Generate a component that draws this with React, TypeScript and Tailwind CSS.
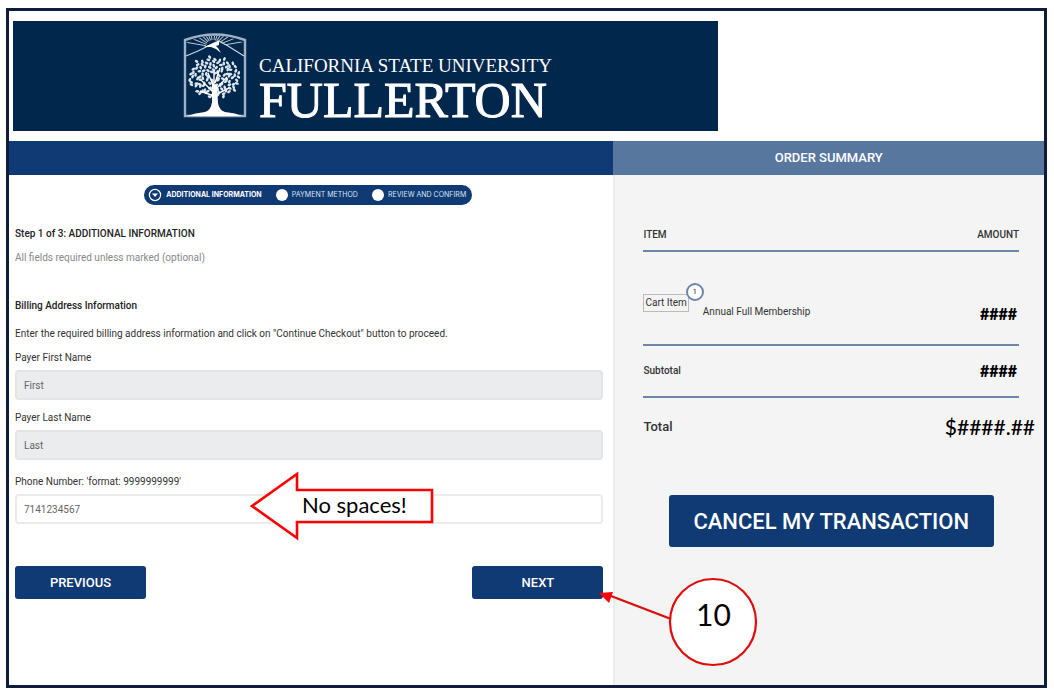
import { useState } from 'react'

const steps = ['ADDITIONAL INFORMATION', 'PAYMENT METHOD', 'REVIEW AND CONFIRM']

const rays = [-80, -68, -56, -44, -32, -20, -8, 8, 20, 32, 44, 56, 68, 80]

// leaves spread evenly over the crown, each one turned differently
const leaves = Array.from({ length: 110 }, (_, i) => {
    const angle = i * 2.39996
    const radius = Math.sqrt((i + 2) / 112)
    return {
        x: 31.5 + Math.cos(angle) * radius * 26 + Math.sin(i * 7.3) * 0.9,
        y: 44.5 + Math.sin(angle) * radius * 20.5 + Math.cos(i * 5.1) * 0.9,
        turn: (i * i * 37) % 180
    }
})

function TreeLogo() {
    return (
        <svg width="64" height="86" viewBox="0 0 64 86" fill="none" aria-hidden="true">
            <clipPath id="crest">
                <path d="M3 10 Q32 -5 61 10 V22 L49 15 L36 9 L28 15 L3 24 Z" />
            </clipPath>
            <g clipPath="url(#crest)" stroke="#b9c7d8" strokeWidth="1">
                {rays.map(deg => (
                    <path key={deg} d="M30 7 V-28" transform={`rotate(${deg} 30 14)`} />
                ))}
            </g>
            <path d="M2 7 Q32 -4 62 7 V83 H2 Z" stroke="#9fb1c6" strokeWidth="2.4" />
            <path d="M3 23 L15 18 L25 13 L31 10 L36 8 L45 13 L61 23" stroke="#c9d5e2" strokeWidth="1.2" />
            <path d="M36 8 L31 10 L21 14 L28 14 L33 16 L38 20 L35 15 L33 13 L36 12 Z" fill="#fff" />
            {leaves.map((leaf, i) => (
                <ellipse
                    key={i}
                    cx={leaf.x}
                    cy={leaf.y}
                    rx="2"
                    ry="1.3"
                    fill="#dce6f0"
                    transform={`rotate(${leaf.turn} ${leaf.x} ${leaf.y})`}
                />
            ))}
            <path d="M31 72 V38 M31 60 L18 47 M32 57 L44 44 M31 54 L25 40 M32 62 L46 55 M31 63 L17 58 M32 50 L37 35" stroke="#fff" strokeWidth="1.4" />
            <path d="M29 52 H34 L35 70 Q36 77 42 79 Q53 80 59 83 H4 Q12 80 22 79 Q28 77 29 69 Z" fill="#fff" />
        </svg>
    )
}

function Banner() {
    return (
        <div className="flex h-[110px] w-[68.6%] items-center gap-3 bg-[#02274c] pl-[170px] text-white">
            <TreeLogo />
            <div className="whitespace-nowrap pt-6 font-['Liberation_Serif',serif]">
                <p className="text-[19px] leading-6">CALIFORNIA STATE UNIVERSITY</p>
                <p className="text-[50px] leading-[44px] [-webkit-text-stroke:1px_white]">FULLERTON</p>
            </div>
        </div>
    )
}

function StepBar() {
    return (
        <div className="flex justify-center pr-1.5">
            <ol className="flex h-5 w-[328px] items-center justify-between rounded-full bg-[#0f3a73] pl-1 pr-1.5 text-[7px] text-white font-[Inter,sans-serif]">
                {steps.map((step, i) => (
                    <li key={step} className="flex items-center gap-1 whitespace-nowrap">
                        {i === 0 ? (
                            <svg width="14" height="14" viewBox="0 0 14 14" aria-hidden="true">
                                <circle cx="7" cy="7" r="5.6" fill="none" stroke="#fff" strokeWidth="1.2" />
                                <path d="M4 5.5 H10 L7 9 Z" fill="#fff" />
                            </svg>
                        ) : (
                            <span className="size-3 rounded-full bg-white" />
                        )}
                        <span className={i === 0 ? 'font-bold' : 'text-[#dbe5f2]'}>{step}</span>
                    </li>
                ))}
            </ol>
        </div>
    )
}

function NoSpacesNote() {
    return (
        <div className="absolute -top-[23px] left-[234px] h-[70px] w-[186px]">
            <svg className="absolute inset-0" width="186" height="70" viewBox="0 0 186 70" aria-hidden="true">
                <path d="M3 35 L48 3 V19 H183 V51 H48 V67 Z" fill="#fff" stroke="#f00" strokeWidth="2.6" />
            </svg>
            <p className="relative pl-[53px] pt-5 text-[22px] leading-7 text-black font-[Lato,sans-serif]">No spaces!</p>
        </div>
    )
}

function StepCallout() {
    return (
        <div className="absolute -right-[156px] top-2 z-10 h-[96px] w-[160px]">
            <svg className="absolute inset-0" width="160" height="96" viewBox="0 0 160 96" aria-hidden="true">
                <path d="M12 22 L72 45" stroke="#d90d0d" strokeWidth="2.4" />
                <path d="M0 19 L14 18 L10 29 Z" fill="#f00" />
                <circle cx="114" cy="48" r="43" fill="#fff" stroke="#e00b0b" strokeWidth="2.2" />
            </svg>
            <p className="relative pl-[68px] pt-5 text-center text-[30px] leading-10 text-black font-[Lato,sans-serif]">10</p>
        </div>
    )
}

const inputStyle = 'mt-1 block h-[30px] w-full rounded-sm border-2 px-[7px] text-[10px] text-[#666]'
const buttonStyle = 'h-[33px] w-[131px] rounded-[3px] bg-[#0f3a73] text-[13px] font-medium text-white'

function PayerForm() {

    const [phone, setPhone] = useState('7141234567')

    return (
        <form className="pl-1.5 pr-2.5 text-[10px] leading-4 text-[#333]" onSubmit={e => e.preventDefault()}>
            <h1 className="mt-[21px] font-medium text-[#222]">Step 1 of 3: ADDITIONAL INFORMATION</h1>
            <p className="mt-2 text-[#888]">All fields required unless marked (optional)</p>
            <h2 className="mt-8 font-medium text-[#222]">Billing Address Information</h2>
            <p className="mt-3">
                Enter the required billing address information and click on "Continue Checkout" button to proceed.
            </p>

            <div className="mt-2">
                <label htmlFor="first">Payer First Name</label>
                <input id="first" className={`${inputStyle} border-[#e2e4e6] bg-[#ebecee]`} defaultValue="First" readOnly />
            </div>
            <div className="mt-2.5">
                <label htmlFor="last">Payer Last Name</label>
                <input id="last" className={`${inputStyle} border-[#e2e4e6] bg-[#ebecee]`} defaultValue="Last" readOnly />
            </div>
            <div className="mt-3.5">
                <label htmlFor="phone">Phone Number: 'format: 9999999999'</label>
                <div className="relative">
                    <input
                        id="phone"
                        className={`${inputStyle} border-[#ebebeb] bg-white`}
                        value={phone}
                        onChange={e => setPhone(e.target.value)}
                    />
                    <NoSpacesNote />
                </div>
            </div>

            <div className="mt-[42px] flex justify-between">
                <button type="button" className={buttonStyle}>PREVIOUS</button>
                <div className="relative">
                    <button type="submit" className={buttonStyle}>NEXT</button>
                    <StepCallout />
                </div>
            </div>
        </form>
    )
}

function OrderSummary() {
    return (
        <aside className="flex flex-1 flex-col">
            <h2 className="bg-[#57779f] text-center text-[13px] font-medium leading-[34px] text-white">ORDER SUMMARY</h2>
            <div className="flex-1 border-l-2 border-[#ebebeb] bg-[#f4f4f4] pl-7 pr-[25px] pt-10">
                <table className="w-full border-collapse text-[10px] leading-4 text-[#333]">
                    <thead>
                        <tr className="h-9 border-b-2 border-[#7086a8]">
                            <th className="pt-3 text-left align-top font-medium">ITEM</th>
                            <th className="pt-3 text-right align-top font-medium">AMOUNT</th>
                        </tr>
                    </thead>
                    <tbody>
                        <tr className="h-[94px] border-b-2 border-[#7086a8]">
                            <td className="pt-[42px] align-top">
                                <div className="flex gap-3">
                                    <span className="relative h-[18px] border border-[#bbb] px-px">
                                        Cart Item
                                        <span className="absolute -right-4 -top-3 flex size-[18px] items-center justify-center rounded-full border-2 border-[#7086a8] bg-white text-[8px]">
                                            1
                                        </span>
                                    </span>
                                    <span className="pl-0.5 pt-2.5">Annual Full Membership</span>
                                </div>
                            </td>
                            <td className="pr-0.5 pt-[50px] text-right align-top text-base font-black text-black font-[Lato,sans-serif]">####</td>
                        </tr>
                        <tr className="h-[52px] border-b-2 border-[#7086a8]">
                            <td className="font-medium">Subtotal</td>
                            <td className="pr-0.5 text-right text-base font-black text-black font-[Lato,sans-serif]">####</td>
                        </tr>
                        <tr className="h-[58px]">
                            <td className="text-[13px] font-medium">Total</td>
                            <td className="text-right text-[21px] text-black font-[Lato,sans-serif]">
                                <span className="-mr-4 font-medium">$####.##</span>
                            </td>
                        </tr>
                    </tbody>
                </table>
                <div className="mt-10 flex justify-center">
                    <button className="h-[52px] w-[325px] rounded-[3px] bg-[#0f3a73] text-[22px] font-medium text-white">
                        CANCEL MY TRANSACTION
                    </button>
                </div>
            </div>
        </aside>
    )
}

function App() {
    return (
        <div className="flex min-h-screen flex-col bg-white pb-[7px] pl-1.5 pr-[7px] pt-2 font-[Roboto,sans-serif]">
            <main className="flex flex-1 flex-col border-[3px] border-[#101c3c]">
                <header className="px-1 pb-2.5 pt-2.5">
                    <Banner />
                </header>
                <div className="flex flex-1">
                    <section className="w-[58.4%]">
                        <div className="mb-2.5 h-[34px] bg-[#0f3a73]" />
                        <StepBar />
                        <PayerForm />
                    </section>
                    <OrderSummary />
                </div>
            </main>
        </div>
    )
}

export default App
